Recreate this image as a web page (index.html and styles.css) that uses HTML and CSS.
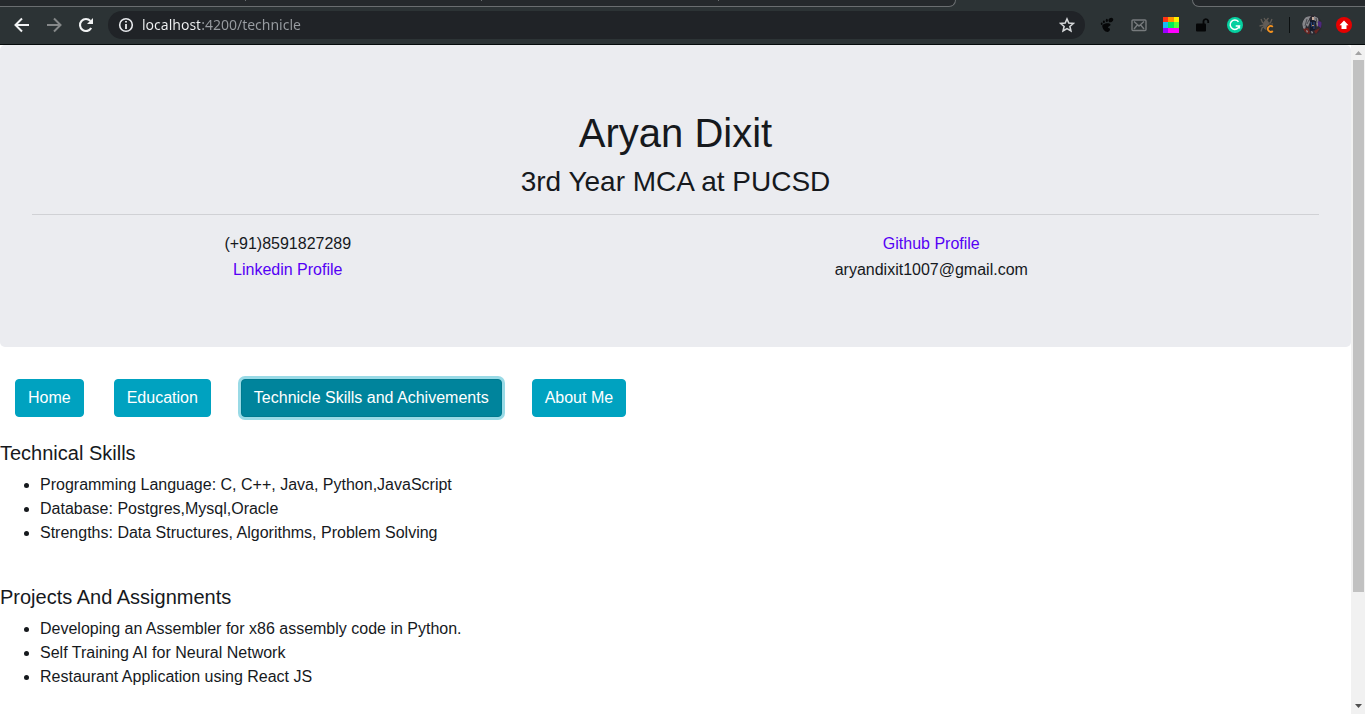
FILE: index.html
```html
<!DOCTYPE html>
<html lang="en">
<head>
<meta charset="utf-8">
<title>Aryan Dixit</title>
<link rel="stylesheet" href="styles.css">
</head>
<body>
<header class="browser">
  <div class="tabs">
    <div class="tab-group tab-group-left"><i></i><i></i><i></i></div>
    <div class="tab-group tab-group-right"></div>
  </div>
  <div class="toolbar">
    <button class="tool" aria-label="Back"><svg width="16" height="16" viewBox="0 0 16 16" fill="none" stroke="#f1f3f4" stroke-width="2"><path d="M15 8H2M8 1.5L1.5 8L8 14.5"/></svg></button>
    <button class="tool" aria-label="Forward"><svg width="16" height="16" viewBox="0 0 16 16" fill="none" stroke="#858889" stroke-width="2"><path d="M1 8H14M8 1.5L14.5 8L8 14.5"/></svg></button>
    <button class="tool" aria-label="Reload"><svg width="16" height="16" viewBox="0 0 16 16"><path d="M13.2 11A6 6 0 1 1 12.4 3.9" fill="none" stroke="#f1f3f4" stroke-width="2.1"/><path d="M15 1V7H9Z" fill="#f1f3f4"/></svg></button>
    <div class="address">
      <svg width="16" height="16" viewBox="0 0 16 16" fill="none" stroke="#e8eaed" stroke-width="1.6"><circle cx="8" cy="8" r="6.3"/><path d="M8 7V12M8 4V5.6" stroke-width="1.8"/></svg>
      <input class="url" type="text" aria-label="Address" value="localhost:4200/technicle">
      <button class="star" aria-label="Bookmark"><svg width="16" height="16" viewBox="0 0 16 16" fill="none" stroke="#d5d7d9" stroke-width="1.6"><path d="M8 2L9.8 6.1L14.3 6.5L10.9 9.5L11.9 13.9L8 11.6L4.1 13.9L5.1 9.5L1.7 6.5L6.2 6.1Z"/></svg></button>
    </div>
    <div class="extensions">
      <button class="ext" aria-label="Gnome extension"><svg width="16" height="16" viewBox="0 0 16 16" fill="#050607"><path d="M3.5 8C6 5.5 11 5.8 11.5 7.5C11.8 9 9 9.3 9 10.5C9.4 11.3 11 10.8 11 12.3C11 14 9.5 15.2 7.5 14.8C5 14.2 2.5 10 3.5 8Z"/><ellipse cx="11.8" cy="3" rx="2.5" ry="2" transform="rotate(-35 11.8 3)"/><ellipse cx="7.8" cy="3.4" rx="1.1" ry="1.7"/><ellipse cx="4.9" cy="4.8" rx="1" ry="1.4"/><ellipse cx="2.7" cy="6.7" rx=".9" ry="1.2"/></svg></button>
      <button class="ext" aria-label="Mail"><svg width="16" height="16" viewBox="0 0 16 16" fill="none" stroke="#777b7d" stroke-width="1.4"><rect x="1" y="3" width="14" height="10.5" rx="1"/><path d="M3 4.5L8 9L13 4.5M3 12L6.3 8M13 12L9.7 8"/></svg></button>
      <button class="ext" aria-label="Colour picker"><svg width="16" height="16" viewBox="0 0 16 16"><path fill="#ff3216" d="M0 0h5v5H0z"/><path fill="#ff9400" d="M5 0h6v5H5z"/><path fill="#fff000" d="M11 0h5v5h-5z"/><path fill="#17baf4" d="M0 5h5v6H0z"/><path fill="#00ed58" d="M5 5h6v6H5z"/><path fill="#55ff37" d="M11 5h5v6h-5z"/><path fill="#9b00ff" d="M0 11h5v5H0z"/><path fill="#f0f" d="M5 11h11v5H5z"/></svg></button>
      <button class="ext" aria-label="Unlock"><svg width="16" height="16" viewBox="0 0 16 16"><rect x="1" y="6.5" width="10" height="8" rx="1" fill="#050607"/><path d="M8.5 7V4A2.4 2.4 0 0 1 13.2 4V6" fill="none" stroke="#050607" stroke-width="1.8"/></svg></button>
      <button class="ext" aria-label="Grammarly"><svg width="16" height="16" viewBox="0 0 16 16"><circle cx="8" cy="8" r="8" fill="#06d0a0"/><path d="M11.5 4.7A4.7 4.7 0 1 0 12.4 9H8.7M12.4 8.5V11.5" fill="none" stroke="#fff" stroke-width="1.5"/></svg></button>
      <button class="ext" aria-label="Bug tracker"><svg width="16" height="16" viewBox="0 0 16 16"><g fill="none" stroke="#625c57" stroke-width="1.3"><path d="M2 2L3.5 5.5L6 7M13 2L11.5 5.5L8 7M0.5 9L5 8M14 7L9 8M2 14.5L3 11L6 9M5 1L7 4L9.5 1"/></g><ellipse cx="7.2" cy="8" rx="3" ry="5" fill="#625c57"/><path d="M13.8 9.8A2.9 2.9 0 1 0 13.8 14" fill="none" stroke="#2c3335" stroke-width="3.4"/><path d="M13.8 9.8A2.9 2.9 0 1 0 13.8 14" fill="none" stroke="#f7931e" stroke-width="1.8"/></svg></button>
    </div>
    <span class="divider"></span>
    <button class="profile" aria-label="Profile"><svg width="20" height="20" viewBox="0 0 20 20"><defs><clipPath id="face"><circle cx="10" cy="10" r="10"/></clipPath></defs><g clip-path="url(#face)"><path fill="#2b2930" d="M0 0h20v20H0z"/><path fill="#85868a" d="M3 2L9 1L7 4L8 7L6 12L4 10L3 15L1 13L0 8ZM12 1L16 3L17 9L15 12L14 7L12 5Z"/><path stroke="#46464c" fill="none" d="M5 4L3 11M7 5L5 9M14 3L15 8"/><path fill="#c5a99a" d="M10 2h2v3h-2z"/><path fill="#141a2c" d="M8 5L14 6L13 15L8 16Z"/><path stroke="#2e4d83" fill="none" d="M9 7L10 12M12 7L12 14"/><path fill="#b88b62" d="M10 10h2v1h-2z"/><path fill="#4d277d" d="M16 6L20 7L19 13L16 11Z"/><path fill="#6a2420" d="M1 14L6 13L8 17L7 20L3 18ZM12 16L18 13L14 19Z"/><path fill="#a0a0a5" d="M4 15L6 16L5 18ZM9 16L11 17L10 19Z"/></g></svg></button>
    <button class="update" aria-label="Update"><svg width="16" height="16" viewBox="0 0 16 16"><circle cx="8" cy="8" r="8" fill="#e60000"/><path fill="#fff" d="M8 3.5L12.5 8.2H10.5V12H5.5V8.2H3.5Z"/></svg></button>
  </div>
</header>
<div class="viewport">
  <main class="page">
    <section class="jumbotron">
      <h1>Aryan Dixit</h1>
      <h3>3rd Year MCA at PUCSD</h3>
      <hr>
      <table class="contact">
        <tr><td>(+91)8591827289</td><td><a href="#github">Github Profile</a></td></tr>
        <tr><td><a href="#linkedin">Linkedin Profile</a></td><td>aryandixit1007@gmail.com</td></tr>
      </table>
    </section>
    <nav class="menu">
      <button class="btn">Home</button>
      <button class="btn">Education</button>
      <button class="btn active">Technicle Skills and Achivements</button>
      <button class="btn">About Me</button>
    </nav>
    <section class="block">
      <h5>Technical Skills</h5>
      <ul>
        <li>Programming Language: C, C++, Java, Python,JavaScript</li>
        <li>Database: Postgres,Mysql,Oracle</li>
        <li>Strengths: Data Structures, Algorithms, Problem Solving</li>
      </ul>
    </section>
    <section class="block">
      <h5>Projects And Assignments</h5>
      <ul>
        <li>Developing an Assembler for x86 assembly code in Python.</li>
        <li>Self Training AI for Neural Network</li>
        <li>Restaurant Application using React JS</li>
      </ul>
    </section>
  </main>
  <div class="scrollbar">
    <svg width="14" height="15" viewBox="0 0 14 15"><path fill="#a3a3a3" d="M4 10L7.5 6L11 10Z"/></svg>
    <div class="thumb"></div>
    <div class="track"></div>
    <svg width="14" height="15" viewBox="0 0 14 15"><path fill="#505050" d="M4 5L7.5 9L11 5Z"/></svg>
  </div>
</div>
</body>
</html>
```
FILE: styles.css
```css
* { box-sizing: border-box; }
body {
  margin: 0;
  height: 100vh;
  display: flex;
  flex-direction: column;
  overflow: hidden;
  background: #fff;
  color: #16191d;
  font: 16px/24px "Liberation Sans", Arial, sans-serif;
}
button { font: inherit; cursor: pointer; }

/* browser chrome */
.browser { flex: none; background: #2c3335; border-bottom: 1px solid #050a0b; }
.tabs { display: flex; justify-content: space-between; height: 7px; }
.tab-group { background: #25292c; border-bottom: 1px solid #6a6e70; }
.tab-group-left {
  width: 70%;
  display: flex;
  justify-content: space-between;
  padding: 0 236px 0 245px;
  border-right: 1px solid #6a6e70;
  border-radius: 0 0 7px 0;
}
.tab-group-left i { width: 1px; height: 1px; background: #6a6e70; }
.tab-group-right { width: 173px; border-left: 1px solid #6a6e70; border-radius: 0 0 0 7px; }
.toolbar { display: flex; align-items: center; height: 37px; padding: 0 13px 2px 14px; }
.toolbar button {
  display: flex;
  padding: 0;
  border: 0;
  background: none;
}
.toolbar .tool { margin-right: 16px; }
.address {
  flex: 1;
  display: flex;
  align-items: center;
  gap: 8px;
  height: 28px;
  margin-left: -2px;
  padding: 0 10px;
  border-radius: 14px;
  background: #202327;
}
.url {
  flex: 1;
  min-width: 0;
  height: 24px;
  padding: 0;
  border: 0;
  outline: 0;
  background: linear-gradient(90deg, #f1f3f4 58px, #989ca1 58px);
  background-clip: text;
  -webkit-background-clip: text;
  color: transparent;
  font: 14px/24px "Noto Sans", "Open Sans", sans-serif;
}
.extensions { display: flex; gap: 16px; margin-left: 14px; }
.divider { width: 1px; height: 16px; margin: 0 12px 0 14px; background: #0b0f10; }
.toolbar .update { margin-left: 14px; }

/* page */
.viewport { flex: 1; min-height: 0; display: flex; }
.page { flex: 1; min-width: 0; overflow: hidden; }
.jumbotron {
  margin-bottom: 32px;
  padding: 64px 32px;
  border-radius: 5px;
  background: #ebecf0;
  text-align: center;
}
h1, h3, h5 { margin: 0 0 8px; font-weight: 500; }
h1 { font-size: 40px; line-height: 48px; }
h3 { font-size: 28px; line-height: 34px; }
h5 { font-size: 20px; line-height: 24px; }
hr { margin: 15px 0 16px; border: 0; border-top: 1px solid #d0d1d5; }
.contact { width: 100%; border-collapse: collapse; }
.contact td { padding: 1px; }
a { color: #5500f5; text-decoration: none; }
.menu { display: flex; gap: 30px; padding: 0 15px; margin-bottom: 24px; }
.btn {
  padding: 6px 12px;
  border: 1px solid #00a2c0;
  border-radius: 4px;
  background: #00a2c0;
  color: #fff;
}
.btn.active {
  border-color: #007a8f;
  background: #00849c;
  box-shadow: 0 0 0 3px #99dae6;
}
.block { padding-bottom: 40px; }
ul { margin: 0; padding-left: 40px; }

/* scrollbar */
.scrollbar {
  width: 14px;
  display: flex;
  flex-direction: column;
  background: #f1f1f1;
}
.thumb { flex: 532; margin: 0 1px 0 2px; background: #c1c1c1; }
.track { flex: 107; }
```
